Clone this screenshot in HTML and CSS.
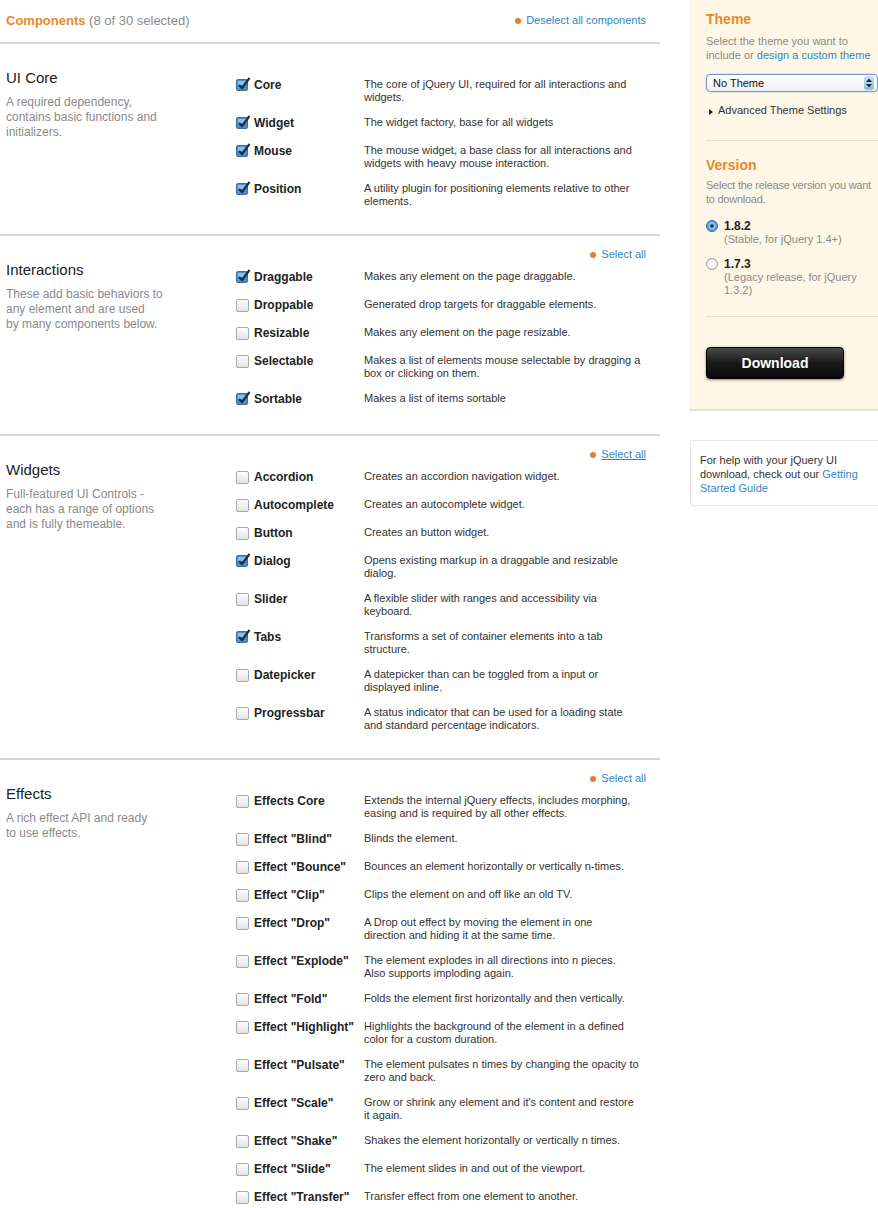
FILE: index.html
```html
<!DOCTYPE html>
<html lang="en">
<head>
<meta charset="utf-8">
<title>Build Your Download</title>
<link rel="stylesheet" href="styles.css">
</head>
<body>
<div class="page">
  <div class="main">
    <div class="header">
      <h1><span class="accent">Components</span> <span class="count">(8 of 30 selected)</span></h1>
      <a class="bullet-link" href="#">Deselect all components</a>
    </div>

    <section class="group">
      <div class="group-info">
        <h2>UI Core</h2>
        <p>A required dependency, contains basic functions and initializers.</p>
      </div>
      <div class="group-items">
        <div class="select-all hidden"><a class="bullet-link" href="#">Select all</a></div>
        <div class="item"><span class="cb on"><svg viewBox="0 0 15 15"><rect x="0.5" y="2.5" width="11" height="11" rx="1.5" fill="#4c8fcf" stroke="#3a6f9f"/><rect x="2" y="4" width="8" height="4" fill="#8fc0ec"/><path d="M3 8 L6 11 L13.5 1" fill="none" stroke="#1d2f44" stroke-width="2.2"/></svg></span><span class="label">Core</span><span class="desc">The core of jQuery UI, required for all interactions and widgets.</span></div>
        <div class="item"><span class="cb on"><svg viewBox="0 0 15 15"><rect x="0.5" y="2.5" width="11" height="11" rx="1.5" fill="#4c8fcf" stroke="#3a6f9f"/><rect x="2" y="4" width="8" height="4" fill="#8fc0ec"/><path d="M3 8 L6 11 L13.5 1" fill="none" stroke="#1d2f44" stroke-width="2.2"/></svg></span><span class="label">Widget</span><span class="desc">The widget factory, base for all widgets</span></div>
        <div class="item"><span class="cb on"><svg viewBox="0 0 15 15"><rect x="0.5" y="2.5" width="11" height="11" rx="1.5" fill="#4c8fcf" stroke="#3a6f9f"/><rect x="2" y="4" width="8" height="4" fill="#8fc0ec"/><path d="M3 8 L6 11 L13.5 1" fill="none" stroke="#1d2f44" stroke-width="2.2"/></svg></span><span class="label">Mouse</span><span class="desc">The mouse widget, a base class for all interactions and widgets with heavy mouse interaction.</span></div>
        <div class="item"><span class="cb on"><svg viewBox="0 0 15 15"><rect x="0.5" y="2.5" width="11" height="11" rx="1.5" fill="#4c8fcf" stroke="#3a6f9f"/><rect x="2" y="4" width="8" height="4" fill="#8fc0ec"/><path d="M3 8 L6 11 L13.5 1" fill="none" stroke="#1d2f44" stroke-width="2.2"/></svg></span><span class="label">Position</span><span class="desc">A utility plugin for positioning elements relative to other elements.</span></div>
      </div>
    </section>

    <section class="group">
      <div class="group-info">
        <h2>Interactions</h2>
        <p>These add basic behaviors to any element and are used<br>by many components below.</p>
      </div>
      <div class="group-items">
        <div class="select-all"><a class="bullet-link" href="#">Select all</a></div>
        <div class="item"><span class="cb on"><svg viewBox="0 0 15 15"><rect x="0.5" y="2.5" width="11" height="11" rx="1.5" fill="#4c8fcf" stroke="#3a6f9f"/><rect x="2" y="4" width="8" height="4" fill="#8fc0ec"/><path d="M3 8 L6 11 L13.5 1" fill="none" stroke="#1d2f44" stroke-width="2.2"/></svg></span><span class="label">Draggable</span><span class="desc">Makes any element on the page draggable.</span></div>
        <div class="item"><span class="cb"></span><span class="label">Droppable</span><span class="desc">Generated drop targets for draggable elements.</span></div>
        <div class="item"><span class="cb"></span><span class="label">Resizable</span><span class="desc">Makes any element on the page resizable.</span></div>
        <div class="item"><span class="cb"></span><span class="label">Selectable</span><span class="desc">Makes a list of elements mouse selectable by dragging a box or clicking on them.</span></div>
        <div class="item"><span class="cb on"><svg viewBox="0 0 15 15"><rect x="0.5" y="2.5" width="11" height="11" rx="1.5" fill="#4c8fcf" stroke="#3a6f9f"/><rect x="2" y="4" width="8" height="4" fill="#8fc0ec"/><path d="M3 8 L6 11 L13.5 1" fill="none" stroke="#1d2f44" stroke-width="2.2"/></svg></span><span class="label">Sortable</span><span class="desc">Makes a list of items sortable</span></div>
      </div>
    </section>

    <section class="group">
      <div class="group-info">
        <h2>Widgets</h2>
        <p>Full-featured UI Controls - each has a range of options and is fully themeable.</p>
      </div>
      <div class="group-items">
        <div class="select-all"><a class="bullet-link underline" href="#">Select all</a></div>
        <div class="item"><span class="cb"></span><span class="label">Accordion</span><span class="desc">Creates an accordion navigation widget.</span></div>
        <div class="item"><span class="cb"></span><span class="label">Autocomplete</span><span class="desc">Creates an autocomplete widget.</span></div>
        <div class="item"><span class="cb"></span><span class="label">Button</span><span class="desc">Creates an button widget.</span></div>
        <div class="item"><span class="cb on"><svg viewBox="0 0 15 15"><rect x="0.5" y="2.5" width="11" height="11" rx="1.5" fill="#4c8fcf" stroke="#3a6f9f"/><rect x="2" y="4" width="8" height="4" fill="#8fc0ec"/><path d="M3 8 L6 11 L13.5 1" fill="none" stroke="#1d2f44" stroke-width="2.2"/></svg></span><span class="label">Dialog</span><span class="desc">Opens existing markup in a draggable and resizable dialog.</span></div>
        <div class="item"><span class="cb"></span><span class="label">Slider</span><span class="desc">A flexible slider with ranges and accessibility via keyboard.</span></div>
        <div class="item"><span class="cb on"><svg viewBox="0 0 15 15"><rect x="0.5" y="2.5" width="11" height="11" rx="1.5" fill="#4c8fcf" stroke="#3a6f9f"/><rect x="2" y="4" width="8" height="4" fill="#8fc0ec"/><path d="M3 8 L6 11 L13.5 1" fill="none" stroke="#1d2f44" stroke-width="2.2"/></svg></span><span class="label">Tabs</span><span class="desc">Transforms a set of container elements into a tab structure.</span></div>
        <div class="item"><span class="cb"></span><span class="label">Datepicker</span><span class="desc">A datepicker than can be toggled from a input or displayed inline.</span></div>
        <div class="item"><span class="cb"></span><span class="label">Progressbar</span><span class="desc">A status indicator that can be used for a loading state and standard percentage indicators.</span></div>
      </div>
    </section>

    <section class="group">
      <div class="group-info">
        <h2>Effects</h2>
        <p>A rich effect API and ready<br>to use effects.</p>
      </div>
      <div class="group-items">
        <div class="select-all"><a class="bullet-link" href="#">Select all</a></div>
        <div class="item"><span class="cb"></span><span class="label">Effects Core</span><span class="desc">Extends the internal jQuery effects, includes morphing, easing and is required by all other effects.</span></div>
        <div class="item"><span class="cb"></span><span class="label">Effect "Blind"</span><span class="desc">Blinds the element.</span></div>
        <div class="item"><span class="cb"></span><span class="label">Effect "Bounce"</span><span class="desc">Bounces an element horizontally or vertically n-times.</span></div>
        <div class="item"><span class="cb"></span><span class="label">Effect "Clip"</span><span class="desc">Clips the element on and off like an old TV.</span></div>
        <div class="item"><span class="cb"></span><span class="label">Effect "Drop"</span><span class="desc">A Drop out effect by moving the element in one<br>direction and hiding it at the same time.</span></div>
        <div class="item"><span class="cb"></span><span class="label">Effect "Explode"</span><span class="desc">The element explodes in all directions into n pieces.<br>Also supports imploding again.</span></div>
        <div class="item"><span class="cb"></span><span class="label">Effect "Fold"</span><span class="desc">Folds the element first horizontally and then vertically.</span></div>
        <div class="item"><span class="cb"></span><span class="label">Effect "Highlight"</span><span class="desc">Highlights the background of the element in a defined color for a custom duration.</span></div>
        <div class="item"><span class="cb"></span><span class="label">Effect "Pulsate"</span><span class="desc">The element pulsates n times by changing the opacity to zero and back.</span></div>
        <div class="item"><span class="cb"></span><span class="label">Effect "Scale"</span><span class="desc">Grow or shrink any element and it's content and restore it again.</span></div>
        <div class="item"><span class="cb"></span><span class="label">Effect "Shake"</span><span class="desc">Shakes the element horizontally or vertically n times.</span></div>
        <div class="item"><span class="cb"></span><span class="label">Effect "Slide"</span><span class="desc">The element slides in and out of the viewport.</span></div>
        <div class="item"><span class="cb"></span><span class="label">Effect "Transfer"</span><span class="desc">Transfer effect from one element to another.</span></div>
      </div>
    </section>
  </div>

  <aside class="side">
    <div class="side-panel">
      <div class="side-block">
        <h3>Theme</h3>
        <p class="side-text">Select the theme you want to include or <a href="#">design a custom theme</a></p>
        <div class="fake-select"><span>No Theme</span><span class="stepper"><svg viewBox="0 0 8 12" width="8" height="12"><path d="M1 5 L4 1.5 L7 5 Z M1 7 L4 10.5 L7 7 Z" fill="#1e2c3c"/></svg></span></div>
        <div class="advanced"><span class="tri"></span>Advanced Theme Settings</div>
      </div>
      <div class="side-block version">
        <h3>Version</h3>
        <p class="side-text tight">Select the release version you want to download.</p>
        <div class="radio-row first">
          <span class="radio"><svg viewBox="0 0 12 12" width="12" height="12"><circle cx="6" cy="6" r="5.5" fill="#5a9fdf" stroke="#3c6f9e"/><circle cx="6" cy="6" r="3.5" fill="#8cc3f2"/><circle cx="6" cy="6" r="1.8" fill="#1b2a3a"/></svg></span>
          <div><div class="ver">1.8.2</div><div class="ver-note">(Stable, for jQuery 1.4+)</div></div>
        </div>
        <div class="radio-row">
          <span class="radio"><svg viewBox="0 0 12 12" width="12" height="12"><circle cx="6" cy="6" r="5.5" fill="#eeeeee" stroke="#9a9a9a"/><circle cx="6" cy="6" r="3" fill="#fafafa"/></svg></span>
          <div><div class="ver">1.7.3</div><div class="ver-note">(Legacy release, for jQuery 1.3.2)</div></div>
        </div>
      </div>
      <div class="download-wrap"><button class="download">Download</button></div>
    </div>
    <div class="help">For help with your jQuery UI download, check out our <a href="#">Getting Started Guide</a></div>
  </aside>
</div>
</body>
</html>
```

FILE: styles.css
```css
* { box-sizing: border-box; }
body {
  margin: 0;
  background: #fff;
  font-family: "Liberation Sans", Arial, sans-serif;
  color: #333;
}
a { color: #2f86c4; text-decoration: none; }

.page {
  display: flex;
  align-items: flex-start;
  gap: 30px;
}
.main { width: 660px; flex: none; }

.header {
  height: 44px;
  display: flex;
  justify-content: space-between;
  align-items: flex-start;
  padding: 13px 14px 0 6px;
  border-bottom: 2px solid #d4d4d4;
}
.header h1 {
  margin: 0;
  font-size: 13px;
  line-height: 16px;
  font-weight: normal;
}
.accent { color: #e8892b; font-weight: bold; }
.count { color: #8a8a8a; }
.header .bullet-link { margin-top: 1px; }

.bullet-link {
  font-size: 11px;
  line-height: 13px;
  display: inline-flex;
  align-items: center;
  gap: 5px;
}
.bullet-link::before {
  content: "";
  width: 6px;
  height: 6px;
  border-radius: 50%;
  background: #ea7a2e;
}
.bullet-link.underline { text-decoration: underline; }

.group {
  display: grid;
  grid-template-columns: 230px 1fr;
  padding: 12px 0 26px;
  border-bottom: 2px solid #d4d4d4;
}
.group:last-child { border-bottom: none; }

.group-info { padding: 13px 20px 0 6px; }
.group-info h2 {
  margin: 0;
  font-size: 15px;
  line-height: 18px;
  font-weight: normal;
  color: #222;
}
.group-info p {
  margin: 8px 0 0;
  font-size: 12px;
  line-height: 15px;
  color: #8a8a8a;
  width: 160px;
}

.group-items {
  display: flex;
  flex-direction: column;
  gap: 12px;
  padding: 0 14px 0 6px;
}
.select-all {
  display: flex;
  justify-content: flex-end;
  height: 13px;
  font-size: 11px;
  line-height: 13px;
  margin-bottom: -3px;
}
.select-all.hidden { visibility: hidden; }

.item {
  display: grid;
  grid-template-columns: 18px 110px 278px;
  align-items: start;
}
.cb {
  width: 13px;
  height: 13px;
  margin-top: 1px;
  border: 1px solid #a9a9a9;
  border-radius: 2px;
  background: linear-gradient(#fdfdfd, #e2e2e2);
  box-shadow: inset 0 1px 0 #fff;
}
.cb.on {
  border: none;
  background: none;
  box-shadow: none;
  width: 15px;
  height: 15px;
  margin-top: -1px;
}
.cb.on svg { display: block; width: 15px; height: 15px; }
.label {
  font-size: 12px;
  font-weight: bold;
  line-height: 14px;
  padding-bottom: 2px;
  color: #222;
  white-space: nowrap;
}
.desc {
  font-size: 11px;
  line-height: 13px;
  color: #333;
}

/* sidebar */
.side { width: 188px; flex: none; }
.side-panel {
  background: #fef7e7;
  border-bottom: 2px solid #ebe3d2;
  padding: 0 0 30px 16px;
}
.side-block {
  border-bottom: 1px solid #e8dcc4;
  padding: 10px 0 23px;
}
.side-block h3 {
  margin: 0;
  font-size: 14px;
  line-height: 18px;
  color: #e8892b;
}
.side-text {
  margin: 6px 0 0;
  font-size: 11px;
  line-height: 14px;
  color: #8a8a8a;
}
.side-text.tight { letter-spacing: -0.25px; }
.fake-select {
  margin-top: 12px;
  height: 18px;
  border: 1px solid #6f97c8;
  border-radius: 4px;
  background: linear-gradient(#ffffff, #eef0f3);
  box-shadow: 0 0 2px #9dbde4;
  display: flex;
  align-items: center;
  justify-content: space-between;
  padding: 0 3px 0 6px;
  font-size: 11px;
  color: #111;
}
.stepper {
  display: flex;
  align-items: center;
  justify-content: center;
  width: 10px;
  height: 14px;
  border-radius: 3px;
  background: linear-gradient(#cfe2f6, #8fb5df);
}
.stepper svg { display: block; }
.advanced {
  margin-top: 11px;
  font-size: 11px;
  line-height: 14px;
  color: #333;
  display: flex;
  align-items: center;
  gap: 5px;
  padding-left: 3px;
}
.tri {
  width: 0;
  height: 0;
  border-top: 3px solid transparent;
  border-bottom: 3px solid transparent;
  border-left: 4px solid #222;
  margin-top: 3px;
}
.version { padding: 15px 0 19px; }
.version .side-text { margin-top: 4px; }
.radio-row {
  display: grid;
  grid-template-columns: 18px 1fr;
  margin-top: 11px;
}
.radio-row.first { margin-top: 13px; }
.radio { padding-top: 1px; }
.radio svg { display: block; }
.ver {
  font-size: 12px;
  font-weight: bold;
  line-height: 14px;
  color: #222;
}
.ver-note {
  font-size: 11px;
  line-height: 13px;
  color: #8a8a8a;
}
.download-wrap { padding-top: 30px; }
.download {
  display: block;
  width: 138px;
  height: 32px;
  border: 1px solid #000;
  border-radius: 4px;
  background: linear-gradient(#4a4a4a, #1a1a1a 50%, #0a0a0a);
  box-shadow: 0 1px 3px rgba(0,0,0,0.45);
  color: #fff;
  font-family: "Liberation Sans", Arial, sans-serif;
  font-size: 14px;
  font-weight: bold;
  padding: 0;
}
.help {
  margin-top: 29px;
  border: 1px solid #e6e6e6;
  border-right: none;
  border-radius: 3px 0 0 3px;
  padding: 12px 10px 10px 9px;
  font-size: 11px;
  line-height: 14px;
  color: #333;
}
```
